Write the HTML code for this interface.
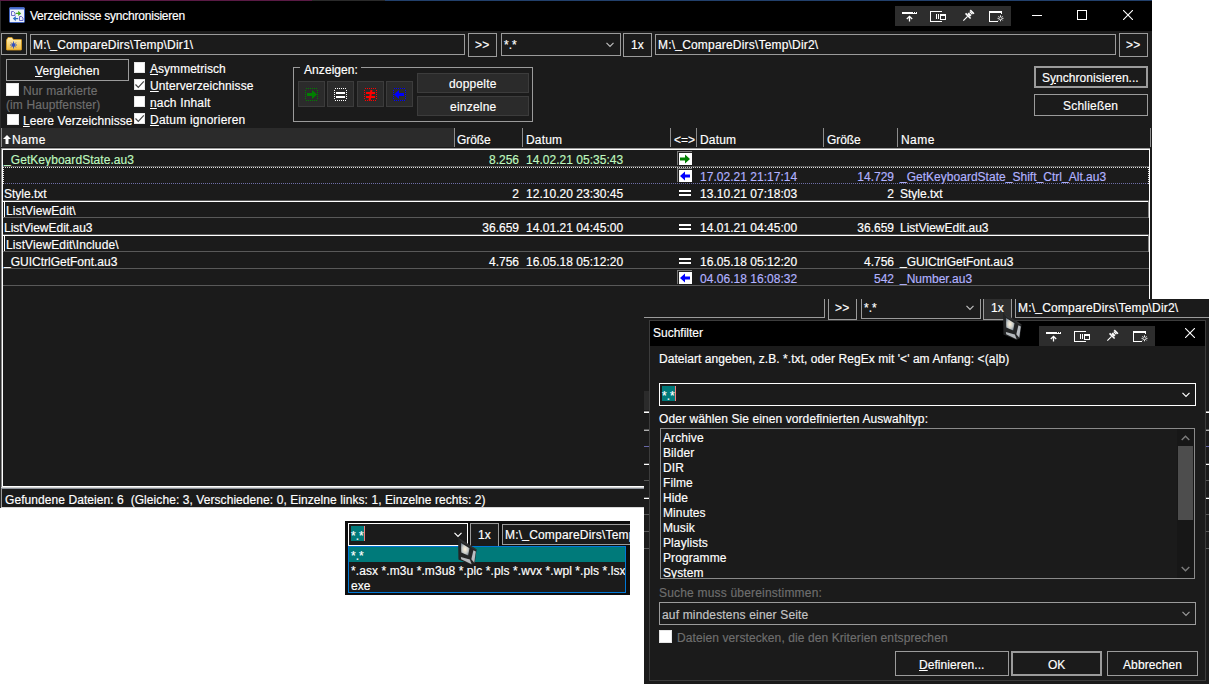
<!DOCTYPE html>
<html><head><meta charset="utf-8"><title>Verzeichnisse synchronisieren</title>
<style>
*{box-sizing:border-box;margin:0;padding:0}
html,body{width:1209px;height:684px;overflow:hidden;background:#fff}
body{position:relative;font-family:"Liberation Sans",sans-serif;font-size:12px;color:#fff;line-height:16px}
.a{position:absolute}
.t{position:absolute;white-space:pre;line-height:16px;height:16px;-webkit-text-stroke:0.17px}
.bx{position:absolute;border:1px solid #9b9b9b;background:#1b1b1b}
.btn{position:absolute;border:1px solid #9b9b9b;background:#1b1b1b;text-align:center}
.cb{position:absolute;background:#fff;border:1px solid #e6e6e6}
.g{color:#6e6e6e}
u{text-decoration:underline;text-underline-offset:1px}
.hl{position:absolute;height:1px;background:#585858}
.wl{position:absolute;height:1px;background:#fff}
#w1{position:absolute;left:0;top:0;width:1152px;height:508px;background:#1b1b1b;overflow:hidden}
#w2{position:absolute;left:644px;top:299px;width:565px;height:385px;background:#1b1b1b;overflow:hidden}
#w3{position:absolute;left:345px;top:521px;width:285px;height:74px;background:#0d0d0d;overflow:hidden}
.grn{color:#bff7bf}.lav{color:#b2b2ff}
.r{text-align:right}
.us{position:relative;top:-1px}
</style></head><body>
<div id="w1">
<div class="a" style="left:0px;top:0px;width:312px;height:1px;background:#5a1a45;"></div>
<div class="a" style="left:312px;top:0px;width:73px;height:1px;background:#2a2a2a;"></div>
<div class="a" style="left:385px;top:0px;width:767px;height:1px;background:#22406c;"></div>
<div class="a" style="left:0px;top:1px;width:1152px;height:30px;background:#000;"></div>
<div class="a" style="left:0px;top:1px;width:1px;height:507px;background:#2c2c2c;"></div>
<svg class="a" style="left:9px;top:7px" width="16" height="16" viewBox="0 0 16 16">
<rect x="0.500" y="0.500" width="15" height="15" rx="1" fill="#eef2fa" stroke="#3f62bd"/><rect x="1" y="1" width="14" height="1.500" fill="#4a6fd0"/>
<path d="M2.500 4.500h2l1.500 1.500v2.500h-3.500z" fill="none" stroke="#6a6ac8"/><path d="M10.500 9.500h2l1.500 1.500v2.500h-3.500z" fill="none" stroke="#6a6ac8"/>
<path d="M6.800 5.700h2.400v-1.900l3 2.600-3 2.600v-1.900h-2.400z" fill="#45a91e"/><path d="M9.200 10.900h-2.400v-1.900l-3 2.600 3 2.600v-1.900h2.400z" fill="#2b6fc4"/></svg>
<div class="t " style="left:30px;top:8px;letter-spacing:-0.221px;">Verzeichnisse synchronisieren</div>
<div class="a" style="left:895px;top:6px;width:116px;height:20px;background:#2d2d2d"><svg class="a" style="left:0;top:0" width="116" height="20" viewBox="0 0 116 20" fill="none" stroke="#fff" stroke-width="1" shape-rendering="crispEdges">
<rect x="7" y="6" width="15" height="2" fill="#fff" stroke="none"/><rect x="18" y="6" width="1" height="1" fill="#2d2d2d" stroke="none"/><rect x="20" y="6" width="1" height="1" fill="#2d2d2d" stroke="none"/>
<path d="M14.500 10.500v5M11.800 13l2.700-2.700 2.700 2.700" shape-rendering="auto" stroke-width="1.300"/>
<path d="M47 5.500h-11.500v10h11.500"/><rect x="41" y="8" width="1" height="5" fill="#fff" stroke="none"/><rect x="43" y="8" width="1" height="5" fill="#fff" stroke="none"/><rect x="45.500" y="8.500" width="5" height="5"/><rect x="46" y="9" width="4" height="1" fill="#fff" stroke="none"/>
<g shape-rendering="auto" transform="translate(73.300 9.700) rotate(45)" fill="#fff" stroke="none"><rect x="-2.600" y="-6.200" width="5.200" height="1.700"/><rect x="-1.900" y="-4.500" width="3.800" height="4"/><rect x="-3.600" y="-0.500" width="7.200" height="1.600"/><rect x="-0.600" y="1" width="1.200" height="6"/><rect x="-1.900" y="-3.300" width="3.800" height="0.700" fill="#2d2d2d"/></g>
<path d="M106.500 8v-2.500h-12v10h8.500"/><rect x="94" y="5" width="13" height="2" fill="#fff" stroke="none"/>
<g shape-rendering="auto" stroke-width="0.900"><path d="M105.500 9.300v6M102.500 12.300h6M103.400 10.200l4.200 4.200M107.600 10.200l-4.200 4.200"/><circle cx="105.500" cy="12.300" r="1.100" fill="#2d2d2d" stroke="none"/></g>
</svg></div>
<div class="a" style="left:1032px;top:15px;width:10px;height:1px;background:#fff;"></div>
<div class="a" style="left:1077px;top:10px;width:10px;height:10px;border:1px solid #fff"></div>
<svg class="a" style="left:1123px;top:10px" width="10" height="10" viewBox="0 0 10 10"><path d="M0 0l10 10M10 0L0 10" stroke="#fff" stroke-width="1.100"/></svg>
<div class="bx" style="left:1px;top:33px;width:26px;height:22px;"></div>
<svg class="a" style="left:6px;top:37px" width="16" height="14" viewBox="0 0 16 14">
<defs><linearGradient id="fg" x1="0" y1="0" x2="0" y2="1"><stop offset="0" stop-color="#fff0b8"/><stop offset="1" stop-color="#f2bd3f"/></linearGradient></defs>
<path d="M0.500 3l1.500-2.500h4l1.500 2h7.500a.5.500 0 0 1 .5.500v9.500a.5.500 0 0 1-.5.500h-14a.5.500 0 0 1-.5-.5z" fill="url(#fg)" stroke="#d99a1c" stroke-width="0.800"/>
<g stroke="#3050c0" stroke-width="0.900"><path d="M7.500 4.500v7M4 8h7M5.100 5.600l4.800 4.800M9.900 5.600l-4.800 4.800"/></g><circle cx="7.500" cy="8" r="1.700" fill="#3050c0"/></svg>
<div class="bx" style="left:30px;top:34px;width:435px;height:21px;"></div>
<div class="t " style="left:33px;top:37px;letter-spacing:0.193px;">M:\<span class="us">_</span>CompareDirs\Temp\Dir1\</div>
<div class="btn" style="left:468px;top:33px;width:29px;height:24px;"></div>
<div class="t " style="left:475px;top:37px;letter-spacing:0.3px">&gt;&gt;</div>
<div class="bx" style="left:501px;top:33px;width:120px;height:23px;"></div>
<div class="t " style="left:504px;top:37px;">*.*</div>
<svg class="a" style="left:606px;top:42px" width="8" height="6" viewBox="0 0 8 6"><path d="M0.500 0.800l3.500 3.700 3.500-3.700" fill="none" stroke="#bdbdbd" stroke-width="1.200"/></svg>
<div class="btn" style="left:623px;top:33px;width:29px;height:24px;"></div>
<div class="t " style="left:631px;top:37px;">1x</div>
<div class="bx" style="left:655px;top:34px;width:461px;height:21px;"></div>
<div class="t " style="left:658px;top:37px;letter-spacing:0.193px;">M:\<span class="us">_</span>CompareDirs\Temp\Dir2\</div>
<div class="btn" style="left:1119px;top:33px;width:29px;height:24px;"></div>
<div class="t " style="left:1126px;top:37px;letter-spacing:0.3px">&gt;&gt;</div>
<div class="btn" style="left:6px;top:59px;width:123px;height:22px;"></div>
<div class="t " style="left:35px;top:63px;letter-spacing:0.171px;"><u>V</u>ergleichen</div>
<div class="cb" style="left:6px;top:83px;width:13px;height:13px;"></div>
<div class="t g" style="left:23px;top:83px;letter-spacing:0.139px;">Nur markierte</div>
<div class="t g" style="left:6px;top:97px;letter-spacing:0.101px;">(im Hauptfenster)</div>
<div class="cb" style="left:7px;top:114px;width:12px;height:11px;"></div>
<div class="t " style="left:23px;top:113px;letter-spacing:0.081px;"><u>L</u>eere Verzeichnisse</div>
<div class="cb" style="left:134px;top:62px;width:11px;height:11px;"></div>
<div class="t " style="left:150px;top:61px;letter-spacing:0.03px;"><u>A</u>symmetrisch</div>
<div class="cb" style="left:134px;top:79px;width:11px;height:11px;"><svg width="11" height="11" viewBox="0 0 11 11" style="position:absolute;left:-1px;top:-1px"><path d="M1.500 5.500l2.800 2.800 5.500-6" fill="none" stroke="#444" stroke-width="1.200"/></svg></div>
<div class="t " style="left:150px;top:78px;letter-spacing:0.081px;"><u>U</u>nterverzeichnisse</div>
<div class="cb" style="left:134px;top:96px;width:11px;height:11px;"></div>
<div class="t " style="left:150px;top:95px;letter-spacing:0.156px;"><u>n</u>ach Inhalt</div>
<div class="cb" style="left:134px;top:113px;width:11px;height:11px;"><svg width="11" height="11" viewBox="0 0 11 11" style="position:absolute;left:-1px;top:-1px"><path d="M1.500 5.500l2.800 2.800 5.500-6" fill="none" stroke="#444" stroke-width="1.200"/></svg></div>
<div class="t " style="left:150px;top:112px;letter-spacing:0.216px;"><u>D</u>atum ignorieren</div>
<div class="a" style="left:293px;top:67px;width:240px;height:55px;border:1px solid #9b9b9b"></div>
<div class="a" style="left:300px;top:67px;width:61px;height:1px;background:#1b1b1b;"></div>
<div class="t " style="left:304px;top:62px;letter-spacing:0.071px;">Anzeigen:</div>
<div class="a" style="left:298px;top:81px;width:27px;height:26px;background:#2b2b2b;border:1px solid #3c3c3c"><svg class="a" style="left:6px;top:6px" width="13" height="13" viewBox="0 0 13 13" shape-rendering="crispEdges"><rect x="0.5" y="0.5" width="12" height="12" rx="2" fill="none" stroke="#008000" stroke-dasharray="1 1"/><path d="M2 5h5v-3l5 4.500-5 4.500v-3h-5z" fill="#008000" shape-rendering="auto"/></svg></div>
<div class="a" style="left:327px;top:81px;width:27px;height:26px;background:#2b2b2b;border:1px solid #3c3c3c"><svg class="a" style="left:6px;top:6px" width="13" height="13" viewBox="0 0 13 13" shape-rendering="crispEdges"><rect x="0.5" y="0.5" width="12" height="12" rx="2" fill="none" stroke="#fff" stroke-dasharray="1 1"/><rect x="2" y="4" width="9" height="2" fill="#fff"/><rect x="2" y="8" width="9" height="2" fill="#fff"/></svg></div>
<div class="a" style="left:357px;top:81px;width:27px;height:26px;background:#2b2b2b;border:1px solid #3c3c3c"><svg class="a" style="left:6px;top:6px" width="13" height="13" viewBox="0 0 13 13" shape-rendering="crispEdges"><rect x="0.5" y="0.5" width="12" height="12" rx="2" fill="none" stroke="#f00" stroke-dasharray="1 1"/><rect x="2" y="4" width="9" height="2" fill="#f00"/><rect x="2" y="8" width="9" height="2" fill="#f00"/><path d="M7.500 2l-2 10.500" stroke="#f00" stroke-width="2" shape-rendering="auto"/></svg></div>
<div class="a" style="left:386px;top:81px;width:27px;height:26px;background:#2b2b2b;border:1px solid #3c3c3c"><svg class="a" style="left:6px;top:6px" width="13" height="13" viewBox="0 0 13 13" shape-rendering="crispEdges"><rect x="0.5" y="0.5" width="12" height="12" rx="2" fill="none" stroke="#00f" stroke-dasharray="1 1"/><path d="M11 5h-5v-3l-5 4.500 5 4.500v-3h5z" fill="#00f" shape-rendering="auto"/></svg></div>
<div class="a" style="left:417px;top:73px;width:112px;height:20px;background:#2b2b2b;border:1px solid #3c3c3c"></div>
<div class="t " style="left:449px;top:76px;letter-spacing:0.196px;">doppelte</div>
<div class="a" style="left:417px;top:96px;width:112px;height:20px;background:#2b2b2b;border:1px solid #3c3c3c"></div>
<div class="t " style="left:450px;top:99px;letter-spacing:0.225px;">einzelne</div>
<div class="btn" style="left:1034px;top:66px;width:114px;height:22px;border:2px solid #9b9b9b"></div>
<div class="t " style="left:1042px;top:70px;letter-spacing:0.037px;">S<u>y</u>nchronisieren...</div>
<div class="btn" style="left:1034px;top:94px;width:114px;height:22px;"></div>
<div class="t " style="left:1063px;top:98px;letter-spacing:0.205px;">Schließen</div>
<div class="a" style="left:1px;top:128px;width:453px;height:19px;background:#2b2b2b;"></div>
<div class="a" style="left:1px;top:128px;width:1px;height:19px;background:#8c8c8c;"></div>
<div class="a" style="left:454px;top:128px;width:1px;height:19px;background:#8c8c8c;"></div>
<div class="a" style="left:522px;top:128px;width:1px;height:19px;background:#8c8c8c;"></div>
<div class="a" style="left:670px;top:128px;width:1px;height:19px;background:#8c8c8c;"></div>
<div class="a" style="left:696px;top:128px;width:1px;height:19px;background:#8c8c8c;"></div>
<div class="a" style="left:823px;top:128px;width:1px;height:19px;background:#8c8c8c;"></div>
<div class="a" style="left:897px;top:128px;width:1px;height:19px;background:#8c8c8c;"></div>
<div class="a" style="left:1150px;top:128px;width:1px;height:19px;background:#8c8c8c;"></div>
<svg class="a" style="left:3px;top:135px" width="8" height="9" viewBox="0 0 8 9"><path d="M4 0l4 4h-2.500v5h-3v-5h-2.500z" fill="#fff"/></svg>
<div class="t " style="left:12px;top:132px;letter-spacing:0.446px;">Name</div>
<div class="t " style="left:457px;top:132px;letter-spacing:-0.1px;">Größe</div>
<div class="t " style="left:526px;top:132px;letter-spacing:0.191px;">Datum</div>
<div class="t " style="left:674px;top:132px;letter-spacing:-0.016px;">&lt;=&gt;</div>
<div class="t " style="left:700px;top:132px;letter-spacing:0.191px;">Datum</div>
<div class="t " style="left:827px;top:132px;letter-spacing:-0.1px;">Größe</div>
<div class="t " style="left:901px;top:132px;letter-spacing:0.446px;">Name</div>
<div class="a" style="left:1px;top:148px;width:1149px;height:1px;background:#9a9a9a;"></div>
<div class="a" style="left:2px;top:149px;width:1148px;height:1px;background:#fff;"></div>
<div class="a" style="left:1px;top:148px;width:1px;height:340px;background:#8a8a8a;"></div>
<div class="a" style="left:2px;top:149px;width:1px;height:338px;background:#fff;"></div>
<div class="a" style="left:1149px;top:149px;width:1px;height:338px;background:#fff;"></div>
<div class="a" style="left:2px;top:486px;width:1148px;height:1px;background:#fff;"></div>
<div class="a" style="left:1px;top:487px;width:1149px;height:1px;background:#d0d0d0;"></div>
<div class="t grn" style="left:4px;top:152px;letter-spacing:0.062px;"><span class="us">_</span>GetKeyboardState.au3</div><div class="t r grn" style="left:319px;width:200px;top:152px;">8.256</div><div class="t grn" style="left:526px;top:152px;letter-spacing:0.029px;">14.02.21 05:35:43</div>
<div class="a" style="left:677px;top:151px;width:15px;height:14px;background:#fff;border-left:1px solid #7a7a7a;border-top:1px solid #7a7a7a"><div class="a" style="left:0;top:0;width:14px;height:13px;border-left:1px solid #222;border-top:1px solid #222"></div><svg class="a" style="left:1px;top:0px" width="14" height="14" viewBox="0 0 14 14"><path d="M1 5.500h5v-3l5 4.500-5 4.500v-3h-5z" fill="#008000"/></svg></div>
<div class="t lav" style="left:700px;top:169px;letter-spacing:0.029px;">17.02.21 21:17:14</div><div class="t r lav" style="left:694px;width:200px;top:169px;">14.729</div><div class="t lav" style="left:900px;top:169px;letter-spacing:0.017px;"><span class="us">_</span>GetKeyboardState<span class="us">_</span>Shift<span class="us">_</span>Ctrl<span class="us">_</span>Alt.au3</div>
<div class="a" style="left:677px;top:168px;width:15px;height:14px;background:#fff;border-left:1px solid #7a7a7a;border-top:1px solid #7a7a7a"><div class="a" style="left:0;top:0;width:14px;height:13px;border-left:1px solid #222;border-top:1px solid #222"></div><svg class="a" style="left:1px;top:0px" width="14" height="14" viewBox="0 0 14 14"><path d="M11 5.500h-5v-3l-5 4.500 5 4.500v-3h5z" fill="#0000ff"/></svg></div>
<div class="t " style="left:4px;top:186px;">Style.txt</div><div class="t r " style="left:319px;width:200px;top:186px;">2</div><div class="t " style="left:526px;top:186px;letter-spacing:0.029px;">12.10.20 23:30:45</div><div class="t " style="left:700px;top:186px;letter-spacing:0.029px;">13.10.21 07:18:03</div><div class="t r " style="left:694px;width:200px;top:186px;">2</div><div class="t " style="left:900px;top:186px;">Style.txt</div>
<div class="a" style="left:679px;top:190px;width:12px;height:2px;background:#fff;"></div><div class="a" style="left:679px;top:194px;width:12px;height:2px;background:#fff;"></div>
<div class="t " style="left:6px;top:203px;letter-spacing:0.1px">ListViewEdit\</div>
<div class="t " style="left:4px;top:220px;">ListViewEdit.au3</div><div class="t r " style="left:319px;width:200px;top:220px;">36.659</div><div class="t " style="left:526px;top:220px;letter-spacing:0.029px;">14.01.21 04:45:00</div><div class="t " style="left:700px;top:220px;letter-spacing:0.029px;">14.01.21 04:45:00</div><div class="t r " style="left:694px;width:200px;top:220px;">36.659</div><div class="t " style="left:900px;top:220px;">ListViewEdit.au3</div>
<div class="a" style="left:679px;top:224px;width:12px;height:2px;background:#fff;"></div><div class="a" style="left:679px;top:228px;width:12px;height:2px;background:#fff;"></div>
<div class="t " style="left:6px;top:237px;letter-spacing:0.1px">ListViewEdit\Include\</div>
<div class="t " style="left:4px;top:254px;"><span class="us">_</span>GUICtrlGetFont.au3</div><div class="t r " style="left:319px;width:200px;top:254px;">4.756</div><div class="t " style="left:526px;top:254px;letter-spacing:0.029px;">16.05.18 05:12:20</div><div class="t " style="left:700px;top:254px;letter-spacing:0.029px;">16.05.18 05:12:20</div><div class="t r " style="left:694px;width:200px;top:254px;">4.756</div><div class="t " style="left:900px;top:254px;"><span class="us">_</span>GUICtrlGetFont.au3</div>
<div class="a" style="left:679px;top:258px;width:12px;height:2px;background:#fff;"></div><div class="a" style="left:679px;top:262px;width:12px;height:2px;background:#fff;"></div>
<div class="t lav" style="left:700px;top:271px;letter-spacing:0.029px;">04.06.18 16:08:32</div><div class="t r lav" style="left:694px;width:200px;top:271px;">542</div><div class="t lav" style="left:900px;top:271px;"><span class="us">_</span>Number.au3</div>
<div class="a" style="left:677px;top:270px;width:15px;height:14px;background:#fff;border-left:1px solid #7a7a7a;border-top:1px solid #7a7a7a"><div class="a" style="left:0;top:0;width:14px;height:13px;border-left:1px solid #222;border-top:1px solid #222"></div><svg class="a" style="left:1px;top:0px" width="14" height="14" viewBox="0 0 14 14"><path d="M11 5.500h-5v-3l-5 4.500 5 4.500v-3h5z" fill="#0000ff"/></svg></div>
<div class="a" style="left:3px;top:166px;width:1146px;height:1px;background:#595959;"></div>
<div class="a" style="left:3px;top:200px;width:1146px;height:1px;background:#595959;"></div>
<div class="a" style="left:3px;top:217px;width:1146px;height:1px;background:#595959;"></div>
<div class="a" style="left:3px;top:234px;width:1146px;height:1px;background:#595959;"></div>
<div class="a" style="left:3px;top:251px;width:1146px;height:1px;background:#595959;"></div>
<div class="a" style="left:3px;top:268px;width:1146px;height:1px;background:#595959;"></div>
<div class="a" style="left:3px;top:285px;width:1146px;height:1px;background:#595959;"></div>
<div class="a" style="left:3px;top:167px;width:1146px;height:1px;background:repeating-linear-gradient(90deg,#e0e0e0 0 1px,transparent 1px 2px)"></div>
<div class="a" style="left:3px;top:183px;width:1146px;height:1px;background:repeating-linear-gradient(90deg,#6e6ea6 0 1px,transparent 1px 2px)"></div>
<div class="a" style="left:3px;top:167px;width:1px;height:17px;background:repeating-linear-gradient(180deg,#e0e0e0 0 1px,transparent 1px 2px)"></div>
<div class="a" style="left:1148px;top:167px;width:1px;height:17px;background:repeating-linear-gradient(180deg,#e0e0e0 0 1px,transparent 1px 2px)"></div>
<div class="a" style="left:3px;top:201px;width:1146px;height:1px;background:#fff;"></div>
<div class="a" style="left:4px;top:201px;width:1px;height:16px;background:#fff;"></div>
<div class="a" style="left:1148px;top:201px;width:1px;height:17px;background:#8a8a8a;"></div>
<div class="a" style="left:3px;top:235px;width:1146px;height:1px;background:#fff;"></div>
<div class="a" style="left:4px;top:235px;width:1px;height:16px;background:#fff;"></div>
<div class="a" style="left:1148px;top:235px;width:1px;height:17px;background:#8a8a8a;"></div>
<div class="a" style="left:1px;top:488px;width:1151px;height:1px;background:#8a9098;"></div>
<div class="a" style="left:1px;top:489px;width:1px;height:19px;background:#9a9a9a;"></div>
<div class="a" style="left:1px;top:507px;width:1151px;height:1px;background:#d8d8d8;"></div>
<div class="t " style="left:5px;top:492px;letter-spacing:0.071px;">Gefundene Dateien: 6  (Gleiche: 3, Verschiedene: 0, Einzelne links: 1, Einzelne rechts: 2)</div>
</div>
<div id="w2">
<div class="bx" style="left:-254px;top:-2px;width:435px;height:21px;"></div>
<div class="btn" style="left:184px;top:-3px;width:29px;height:24px;"></div>
<div class="t " style="left:191px;top:1px;letter-spacing:0.3px">&gt;&gt;</div>
<div class="bx" style="left:217px;top:-3px;width:120px;height:23px;"></div>
<div class="t " style="left:220px;top:1px;">*.*</div>
<svg class="a" style="left:322px;top:6px" width="8" height="6" viewBox="0 0 8 6"><path d="M0.500 0.800l3.500 3.700 3.500-3.700" fill="none" stroke="#bdbdbd" stroke-width="1.200"/></svg>
<div class="bx" style="left:371px;top:-2px;width:461px;height:21px;"></div>
<div class="t " style="left:374px;top:1px;letter-spacing:0.193px;">M:\<span class="us">_</span>CompareDirs\Temp\Dir2\</div>
<div class="a" style="left:0px;top:92px;width:5px;height:19px;background:#2b2b2b;"></div>
<div class="a" style="left:0px;top:112px;width:565px;height:1px;background:#9a9a9a;"></div>
<div class="a" style="left:0px;top:113px;width:565px;height:1px;background:#fff;"></div>
<div class="a" style="left:0px;top:130px;width:565px;height:1px;background:#595959;"></div>
<div class="a" style="left:0px;top:131px;width:565px;height:1px;background:#b0b0b0;"></div>
<div class="a" style="left:0px;top:147px;width:565px;height:1px;background:#6868a8;"></div>
<div class="a" style="left:0px;top:164px;width:565px;height:1px;background:#595959;"></div>
<div class="a" style="left:0px;top:165px;width:565px;height:1px;background:#fff;"></div>
<div class="a" style="left:0px;top:181px;width:565px;height:1px;background:#595959;"></div>
<div class="a" style="left:0px;top:198px;width:565px;height:1px;background:#595959;"></div>
<div class="a" style="left:0px;top:199px;width:565px;height:1px;background:#fff;"></div>
<div class="a" style="left:0px;top:215px;width:565px;height:1px;background:#595959;"></div>
<div class="a" style="left:0px;top:232px;width:565px;height:1px;background:#595959;"></div>
<div class="a" style="left:0px;top:249px;width:565px;height:1px;background:#595959;"></div>
<div class="btn" style="left:339px;top:-3px;width:29px;height:24px;background:#2e2e2e"></div>
<div class="t " style="left:347px;top:1px;">1x</div>
<div class="a" style="left:5px;top:21px;width:557px;height:361px;background:#1b1b1b;border:1px solid #3c3c3c"></div>
<div class="a" style="left:6px;top:22px;width:555px;height:25px;background:#000;"></div>
<div class="t " style="left:9px;top:26px;letter-spacing:-0.002px;">Suchfilter</div>
<div class="a" style="left:395px;top:27px;width:116px;height:20px;background:#2d2d2d"><svg class="a" style="left:0;top:0" width="116" height="20" viewBox="0 0 116 20" fill="none" stroke="#fff" stroke-width="1" shape-rendering="crispEdges">
<rect x="7" y="6" width="15" height="2" fill="#fff" stroke="none"/><rect x="18" y="6" width="1" height="1" fill="#2d2d2d" stroke="none"/><rect x="20" y="6" width="1" height="1" fill="#2d2d2d" stroke="none"/>
<path d="M14.500 10.500v5M11.800 13l2.700-2.700 2.700 2.700" shape-rendering="auto" stroke-width="1.300"/>
<path d="M47 5.500h-11.500v10h11.500"/><rect x="41" y="8" width="1" height="5" fill="#fff" stroke="none"/><rect x="43" y="8" width="1" height="5" fill="#fff" stroke="none"/><rect x="45.500" y="8.500" width="5" height="5"/><rect x="46" y="9" width="4" height="1" fill="#fff" stroke="none"/>
<g shape-rendering="auto" transform="translate(73.300 9.700) rotate(45)" fill="#fff" stroke="none"><rect x="-2.600" y="-6.200" width="5.200" height="1.700"/><rect x="-1.900" y="-4.500" width="3.800" height="4"/><rect x="-3.600" y="-0.500" width="7.200" height="1.600"/><rect x="-0.600" y="1" width="1.200" height="6"/><rect x="-1.900" y="-3.300" width="3.800" height="0.700" fill="#2d2d2d"/></g>
<path d="M106.500 8v-2.500h-12v10h8.500"/><rect x="94" y="5" width="13" height="2" fill="#fff" stroke="none"/>
<g shape-rendering="auto" stroke-width="0.900"><path d="M105.500 9.300v6M102.500 12.300h6M103.400 10.200l4.200 4.200M107.600 10.200l-4.200 4.200"/><circle cx="105.500" cy="12.300" r="1.100" fill="#2d2d2d" stroke="none"/></g>
</svg></div>
<svg class="a" style="left:541px;top:29px" width="10" height="10" viewBox="0 0 10 10"><path d="M0 0l10 10M10 0L0 10" stroke="#fff" stroke-width="1.100"/></svg>
<div class="t " style="left:15px;top:52px;letter-spacing:0.058px;">Dateiart angeben, z.B. *.txt, oder RegEx mit '&lt;' am Anfang: &lt;(a|b)</div>
<div class="bx" style="left:15px;top:84px;width:537px;height:23px;border-color:#fff"></div>
<div class="a" style="left:18px;top:87px;width:13px;height:15px;background:#007a7a;"></div>
<div class="a" style="left:31px;top:87px;width:1px;height:15px;background:#f08080;"></div>
<div class="t " style="left:18px;top:89px;">*.*</div>
<svg class="a" style="left:538px;top:93px" width="8" height="6" viewBox="0 0 8 6"><path d="M0.500 0.800l3.500 3.700 3.500-3.700" fill="none" stroke="#fff" stroke-width="1.200"/></svg>
<div class="t " style="left:15px;top:112px;letter-spacing:0.088px;">Oder wählen Sie einen vordefinierten Auswahltyp:</div>
<div class="bx" style="left:16px;top:129px;width:535px;height:151px;border-color:#8a8a8a;overflow:hidden"><div class="t" style="left:2px;top:1px;letter-spacing:0.1px">Archive</div><div class="t" style="left:2px;top:16px;letter-spacing:0.1px">Bilder</div><div class="t" style="left:2px;top:31px;letter-spacing:0.1px">DIR</div><div class="t" style="left:2px;top:46px;letter-spacing:0.1px">Filme</div><div class="t" style="left:2px;top:61px;letter-spacing:0.1px">Hide</div><div class="t" style="left:2px;top:76px;letter-spacing:0.1px">Minutes</div><div class="t" style="left:2px;top:91px;letter-spacing:0.1px">Musik</div><div class="t" style="left:2px;top:106px;letter-spacing:0.1px">Playlists</div><div class="t" style="left:2px;top:121px;letter-spacing:0.1px">Programme</div><div class="t" style="left:2px;top:136px;letter-spacing:0.1px">System</div><div class="a" style="left:516px;top:0;width:17px;height:149px;background:#171717"></div><div class="a" style="left:517px;top:17px;width:15px;height:74px;background:#4d4d4d"></div><svg class="a" style="left:520px;top:6px" width="9" height="6" viewBox="0 0 9 6"><path d="M0.700 5l3.800-3.800 3.800 3.800" fill="none" stroke="#7c7c7c" stroke-width="1.400"/></svg><svg class="a" style="left:520px;top:137px" width="9" height="6" viewBox="0 0 9 6"><path d="M0.700 1l3.800 3.800 3.800-3.800" fill="none" stroke="#7c7c7c" stroke-width="1.400"/></svg></div>
<div class="t g" style="left:15px;top:286px;letter-spacing:0.191px;">Suche muss übereinstimmen:</div>
<div class="bx" style="left:15px;top:303px;width:537px;height:23px;"></div>
<div class="t " style="left:18px;top:308px;letter-spacing:0.167px;color:#c4c4c4">auf mindestens einer Seite</div>
<svg class="a" style="left:538px;top:312px" width="8" height="6" viewBox="0 0 8 6"><path d="M0.500 0.800l3.500 3.700 3.500-3.700" fill="none" stroke="#9b9b9b" stroke-width="1.200"/></svg>
<div class="cb" style="left:15px;top:331px;width:13px;height:13px;"></div>
<div class="t g" style="left:33px;top:331px;letter-spacing:0.092px;">Dateien verstecken, die den Kriterien entsprechen</div>
<div class="btn" style="left:251px;top:352px;width:114px;height:25px;"></div>
<div class="t " style="left:275px;top:358px;letter-spacing:0.055px;"><u>D</u>efinieren...</div>
<div class="btn" style="left:367px;top:352px;width:91px;height:25px;border:2px solid #9b9b9b"></div>
<div class="t " style="left:404px;top:358px;">OK</div>
<div class="btn" style="left:463px;top:352px;width:91px;height:25px;"></div>
<div class="t " style="left:479px;top:358px;letter-spacing:0.108px;">Abbrechen</div>
<svg class="a" style="left:358px;top:13px" width="23" height="29.400" viewBox="0 0 22 28">
<defs><radialGradient id="cg1" cx="48%" cy="50%" r="60%"><stop offset="0" stop-color="#fff2dc"/><stop offset="0.550" stop-color="#c9ccc8"/><stop offset="1" stop-color="#6f7d8c"/></radialGradient></defs>
<path d="M1 0.400l17.700 11.400-1.700 13.200-3 1.800-12.600-5.300z" fill="#232425"/>
<path d="M1 0.400l17.700 11.400-1 .9-13.500-8z" fill="#303132"/>
<path d="M3.800 5.700l8.200 5-1.300 6.900-6.700-2.800z" fill="url(#cg1)"/>
<path d="M15.700 12.600l2.300 1.100-1.500 10.800-2.800-3.300z" fill="#b9bdc2"/>
<path d="M3.700 19l8.600 2.500 1.700 4.500-10-4.800z" fill="#b4b8bc"/></svg>
</div>
<div id="w3">
<div class="bx" style="left:3px;top:2px;width:120px;height:23px;border-color:#fff"></div>
<div class="a" style="left:6px;top:5px;width:13px;height:15px;background:#007a7a;"></div>
<div class="a" style="left:19px;top:5px;width:1px;height:15px;background:#f08080;"></div>
<div class="t " style="left:6px;top:7px;">*.*</div>
<svg class="a" style="left:109px;top:11px" width="8" height="6" viewBox="0 0 8 6"><path d="M0.500 0.800l3.500 3.700 3.500-3.700" fill="none" stroke="#fff" stroke-width="1.200"/></svg>
<div class="btn" style="left:125px;top:2px;width:29px;height:24px;"></div>
<div class="t " style="left:133px;top:6px;">1x</div>
<div class="bx" style="left:157px;top:3px;width:300px;height:21px;"></div>
<div class="t " style="left:160px;top:6px;letter-spacing:0.193px;">M:\<span class="us">_</span>CompareDirs\Temp\Dir2\</div>
<div class="bx" style="left:3px;top:25px;width:278px;height:47px;border-color:#0078d7;overflow:hidden"><div class="a" style="left:0;top:0;width:276px;height:15px;background:#007a7a"></div><div class="t" style="left:2px;top:1px;">*.*</div><div class="t" style="left:2px;top:16px;letter-spacing:0.084px">*.asx *.m3u *.m3u8 *.plc *.pls *.wvx *.wpl *.pls *.lsx</div><div class="t" style="left:2px;top:31px;">exe</div></div>
<svg class="a" style="left:112px;top:16px" width="23" height="29.400" viewBox="0 0 22 28">
<defs><radialGradient id="cg2" cx="48%" cy="50%" r="60%"><stop offset="0" stop-color="#fff2dc"/><stop offset="0.550" stop-color="#c9ccc8"/><stop offset="1" stop-color="#6f7d8c"/></radialGradient></defs>
<path d="M1 0.400l17.700 11.400-1.700 13.200-3 1.800-12.600-5.300z" fill="#232425"/>
<path d="M1 0.400l17.700 11.400-1 .9-13.500-8z" fill="#303132"/>
<path d="M3.800 5.700l8.200 5-1.300 6.900-6.700-2.800z" fill="url(#cg2)"/>
<path d="M15.700 12.600l2.300 1.100-1.500 10.800-2.800-3.300z" fill="#b9bdc2"/>
<path d="M3.700 19l8.600 2.500 1.700 4.500-10-4.800z" fill="#b4b8bc"/></svg>
</div>
</body></html>
